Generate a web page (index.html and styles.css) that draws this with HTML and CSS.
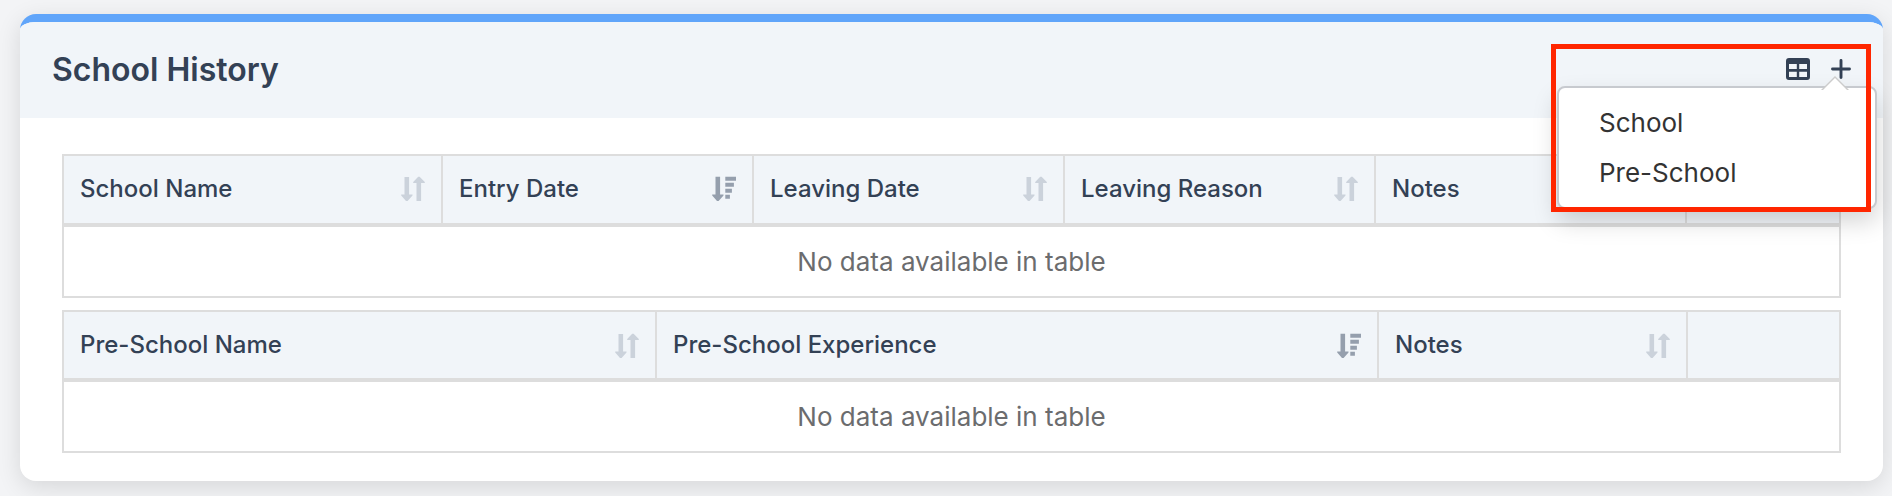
FILE: index.html
```html
<!DOCTYPE html>
<html lang="en">
<head>
<meta charset="utf-8">
<title>School History</title>
<link rel="stylesheet" href="styles.css">
</head>
<body>
<svg class="sprite" aria-hidden="true">
  <symbol id="sort" viewBox="0 0 24 25">
    <path d="M3.5 1h4.6v17.5h3.4v1L6.6 25H5L.2 19.500v-1h3.300zM15.500 25h4.600V7h3.700V6L18.600.8h-1.400L12.200 6v1h3.300z"/>
  </symbol>
  <symbol id="sort-desc" viewBox="0 0 24 25">
    <path d="M3.500.7h4.600v17.800h3.400v1L6.600 25H5L.2 19.500v-1h3.300zM13.300.7H24v4H13.300zM13.300 6.700h8.600v4h-8.600zM13.300 12.700h6.600v4h-6.600zM13.300 18.700h4.600v4h-4.600z"/>
  </symbol>
</svg>
<section class="card">
  <header class="card-header">
    <h2 class="title">School History</h2>
    <div class="actions">
      <svg class="icon-table" viewBox="0 0 24 22"><path fill-rule="evenodd" d="M3 0h18a3 3 0 0 1 3 3v16a3 3 0 0 1-3 3H3a3 3 0 0 1-3-3V3a3 3 0 0 1 3-3zM3 6v5h7.800V6zM13.200 6v5H21V6zM3 13.700V19h7.800v-5.300zM13.200 13.700V19H21v-5.300z"/></svg>
      <svg class="icon-plus" viewBox="0 0 20 20"><path d="M10 1.500v17M1.500 10h17"/></svg>
      <ul class="menu">
        <li>School</li>
        <li>Pre-School</li>
      </ul>
      <div class="highlight"></div>
    </div>
  </header>
  <div class="card-body">
    <table class="grid">
      <colgroup><col class="w-name"><col class="w-std"><col class="w-std"><col class="w-std"><col class="w-std"><col class="w-end"></colgroup>
      <thead>
        <tr>
          <th><div class="head">School Name<svg class="sort"><use href="#sort"/></svg></div></th>
          <th><div class="head">Entry Date<svg class="sort active"><use href="#sort-desc"/></svg></div></th>
          <th><div class="head">Leaving Date<svg class="sort"><use href="#sort"/></svg></div></th>
          <th><div class="head">Leaving Reason<svg class="sort"><use href="#sort"/></svg></div></th>
          <th><div class="head">Notes<svg class="sort"><use href="#sort"/></svg></div></th>
          <th></th>
        </tr>
      </thead>
      <tbody><tr><td colspan="6">No data available in table</td></tr></tbody>
    </table>
    <table class="grid preschool">
      <colgroup><col class="w-pre-name"><col class="w-pre-exp"><col class="w-pre-notes"><col class="w-pre-end"></colgroup>
      <thead>
        <tr>
          <th><div class="head">Pre-School Name<svg class="sort"><use href="#sort"/></svg></div></th>
          <th><div class="head">Pre-School Experience<svg class="sort active"><use href="#sort-desc"/></svg></div></th>
          <th><div class="head">Notes<svg class="sort"><use href="#sort"/></svg></div></th>
          <th></th>
        </tr>
      </thead>
      <tbody><tr><td colspan="4">No data available in table</td></tr></tbody>
    </table>
  </div>
</section>
</body>
</html>
```
FILE: styles.css
```css
* { box-sizing: border-box; }

body {
  margin: 0;
  height: 496px;
  overflow: hidden;
  padding: 14px 9px 15px 20px;
  background: #f3f4f6;
  font-family: Inter, "Liberation Sans", sans-serif;
}

.sprite { display: none; }

.card {
  width: 1863px;
  height: 467px;
  border-top: 8px solid #60a5fa;
  border-radius: 16px;
  background: #fff;
  box-shadow: 0 6px 24px rgba(0, 0, 0, .12);
}

.card-header {
  display: flex;
  align-items: center;
  justify-content: space-between;
  height: 96px;
  padding: 0 32px;
  border-radius: 16px 16px 0 0 / 8px 8px 0 0;
  background: #f1f5f9;
}

.title {
  margin: 0;
  color: #334155;
  font-size: 32px;
  font-weight: 600;
  line-height: 40px;
}

.actions {
  position: relative;
  display: flex;
  align-items: center;
  gap: 21px;
  margin-bottom: 2px;
}

.icon-table { width: 24px; height: 22px; fill: #334155; }

.icon-plus {
  width: 20px;
  height: 20px;
  fill: none;
  stroke: #334155;
  stroke-width: 2.900;
  stroke-linecap: round;
}

.menu {
  position: absolute;
  z-index: 2;
  top: 28px;
  right: -26px;
  width: 320px;
  height: 123px;
  margin: 0;
  padding: 10px 0 0 40px;
  border: 2px solid #c7cacf;
  border-radius: 8px;
  background: #fff;
  box-shadow: 0 12px 24px rgba(0, 0, 0, .175);
  color: #333;
  font-size: 26px;
  line-height: 50px;
  list-style: none;
}

.menu::before,
.menu::after {
  content: "";
  position: absolute;
  border: solid transparent;
  border-top: 0;
}

.menu::before {
  top: -12px;
  right: 26px;
  border-width: 0 14px 14px;
  border-bottom-color: #ccc;
}

.menu::after {
  top: -10px;
  right: 28px;
  border-width: 0 12px 12px;
  border-bottom-color: #fff;
}

.highlight {
  position: absolute;
  z-index: 3;
  top: -14px;
  right: -20px;
  width: 320px;
  height: 168px;
  border: 5px solid #ff2600;
}

.card-body { padding: 36px 42px 0; }

.grid {
  width: 1779px;
  table-layout: fixed;
  border-spacing: 0;
}

.preschool { margin-top: 12px; }

.w-name { width: 381px; }
.w-std { width: 311px; }
.w-end { width: 154px; }
.w-pre-name { width: 595px; }
.w-pre-exp { width: 722px; }
.w-pre-notes { width: 309px; }
.w-pre-end { width: 153px; }

.grid th {
  height: 73px;
  padding: 0 16px 2px;
  border: 2px solid #ddd;
  border-width: 2px 2px 4px 0;
  background: #f1f5f9;
  color: #334155;
  font-size: 24px;
  font-weight: 500;
  text-align: left;
}

.grid th:first-child { border-left-width: 2px; }
.grid.preschool th { height: 72px; padding-bottom: 0; }

.head {
  display: flex;
  align-items: center;
  justify-content: space-between;
  line-height: 30px;
}

.sort { width: 24px; height: 25px; fill: #cbd2db; }
.sort.active { fill: #959fad; }

.grid td {
  height: 71px;
  padding: 0;
  border: 2px solid #ddd;
  border-top: 0;
  color: #6b6c6e;
  font-size: 26px;
  text-align: center;
}
```
